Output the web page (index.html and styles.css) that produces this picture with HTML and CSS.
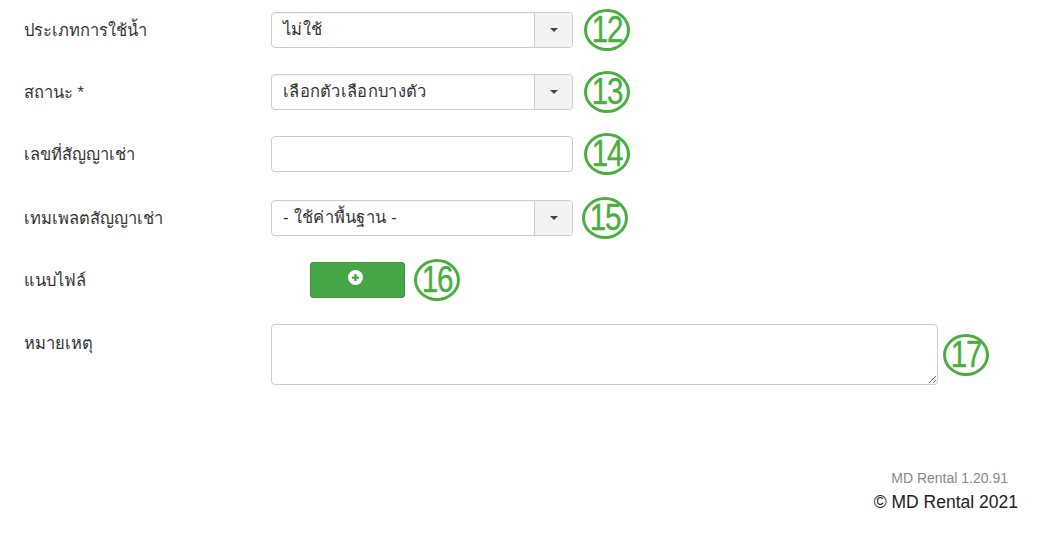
FILE: index.html
```html
<!DOCTYPE html>
<html lang="th">
<head>
    <meta charset="utf-8">
    <title>MD Rental</title>
    <link rel="stylesheet" href="styles.css">
</head>
<body>
    <form class="form">
        <div class="row">
            <label class="label">ประเภทการใช้น้ำ</label>
            <div class="field">
                <div class="select">
                    <span class="select-text">ไม่ใช้</span>
                    <span class="select-btn"><i class="caret"></i></span>
                </div>
                <span class="badge"><span>12</span></span>
            </div>
        </div>
        <div class="row">
            <label class="label">สถานะ *</label>
            <div class="field">
                <div class="select">
                    <span class="select-text">เลือกตัวเลือกบางตัว</span>
                    <span class="select-btn"><i class="caret"></i></span>
                </div>
                <span class="badge"><span>13</span></span>
            </div>
        </div>
        <div class="row row-gap">
            <label class="label">เลขที่สัญญาเช่า</label>
            <div class="field">
                <input type="text" class="input">
                <span class="badge"><span>14</span></span>
            </div>
        </div>
        <div class="row">
            <label class="label">เทมเพลตสัญญาเช่า</label>
            <div class="field">
                <div class="select">
                    <span class="select-text">- ใช้ค่าพื้นฐาน -</span>
                    <span class="select-btn"><i class="caret"></i></span>
                </div>
                <span class="badge badge-left"><span>15</span></span>
            </div>
        </div>
        <div class="row">
            <label class="label">แนบไฟล์</label>
            <div class="field">
                <button type="button" class="btn-add">
                    <svg width="15" height="15" viewBox="0 0 16 16">
                        <circle cx="8" cy="8" r="8" fill="#fff"/>
                        <path d="M8 4.2v7.6M4.2 8h7.6" stroke="#46a546" stroke-width="2.4"/>
                    </svg>
                </button>
                <span class="badge badge-near"><span>16</span></span>
            </div>
        </div>
        <div class="row">
            <label class="label label-top">หมายเหตุ</label>
            <div class="field">
                <textarea class="textarea"></textarea>
                <span class="badge badge-tight"><span>17</span></span>
            </div>
        </div>
    </form>

    <footer class="footer">
        <div class="version">MD Rental 1.20.91</div>
        <div class="copy">© MD Rental 2021</div>
    </footer>
</body>
</html>
```

FILE: styles.css
```css
body {
    margin: 0;
    padding: 12px 0 0 24px;
    font-family: 'Liberation Sans', Arial, sans-serif;
    font-size: 16.5px;
    color: #333;
    background: #fff;
}
.form {
    width: 1000px;
}
.row {
    display: flex;
    align-items: flex-start;
    margin-bottom: 26px;
}
.row-gap {
    margin-bottom: 28px;
}
.label {
    width: 247px;
    flex-shrink: 0;
    line-height: 36px;
}
.label-top {
    line-height: 20px;
    padding-top: 9px;
}
.field {
    display: flex;
    align-items: center;
}
.select {
    width: 302px;
    height: 36px;
    box-sizing: border-box;
    border: 1px solid #ccc;
    border-radius: 4px;
    display: flex;
    align-items: stretch;
    overflow: hidden;
    box-shadow: inset 0 1px 1px rgba(0, 0, 0, 0.04);
}
.select-text {
    flex: 1;
    padding-left: 11px;
    line-height: 33px;
    color: #333;
    letter-spacing: 0.3px;
}
.select-btn {
    width: 37px;
    background-color: #f3f3f3;
    border-left: 1px solid #ccc;
    display: flex;
    align-items: center;
    justify-content: center;
}
.caret {
    width: 0;
    height: 0;
    border-left: 4px solid transparent;
    border-right: 4px solid transparent;
    border-top: 4px solid #444;
}
.input {
    width: 302px;
    height: 36px;
    box-sizing: border-box;
    border: 1px solid #ccc;
    border-radius: 4px;
    margin: 0;
    padding: 0 10px;
}
.textarea {
    width: 667px;
    height: 61px;
    box-sizing: border-box;
    border: 1px solid #ccc;
    border-radius: 4px;
    margin: 0;
    padding: 6px;
    display: block;
    resize: both;
}
.btn-add {
    margin-left: 39px;
    width: 95px;
    height: 36px;
    border: 1px solid #3f953f;
    border-radius: 3px;
    background-color: #46a546;
    display: flex;
    align-items: center;
    justify-content: center;
    padding: 0 4px 5px 0;
    cursor: pointer;
}
.badge {
    margin: -3px 0 -3px 11px;
    width: 46px;
    height: 42px;
    box-sizing: border-box;
    border: 3px solid #4aae3f;
    border-radius: 50%;
    color: #4aae3f;
    font-family: 'Liberation Sans', sans-serif;
    font-size: 37px;
    line-height: 36px;
    text-align: center;
    display: flex;
    justify-content: center;
}
.badge span {
    display: inline-block;
    transform: scaleX(0.8);
    letter-spacing: -1.5px;
    -webkit-text-stroke: 0.4px #4aae3f;
}
.badge-left {
    margin-left: 9px;
}
.badge-near {
    margin-left: 9px;
}
.badge-tight {
    margin-left: 5px;
}
.footer {
    text-align: right;
    width: 994px;
    margin-top: 84px;
}
.version {
    font-size: 14px;
    color: #888;
    padding-right: 10px;
    line-height: 18px;
}
.copy {
    font-size: 17.5px;
    color: #222;
    margin-top: 5px;
    line-height: 20px;
}
```
